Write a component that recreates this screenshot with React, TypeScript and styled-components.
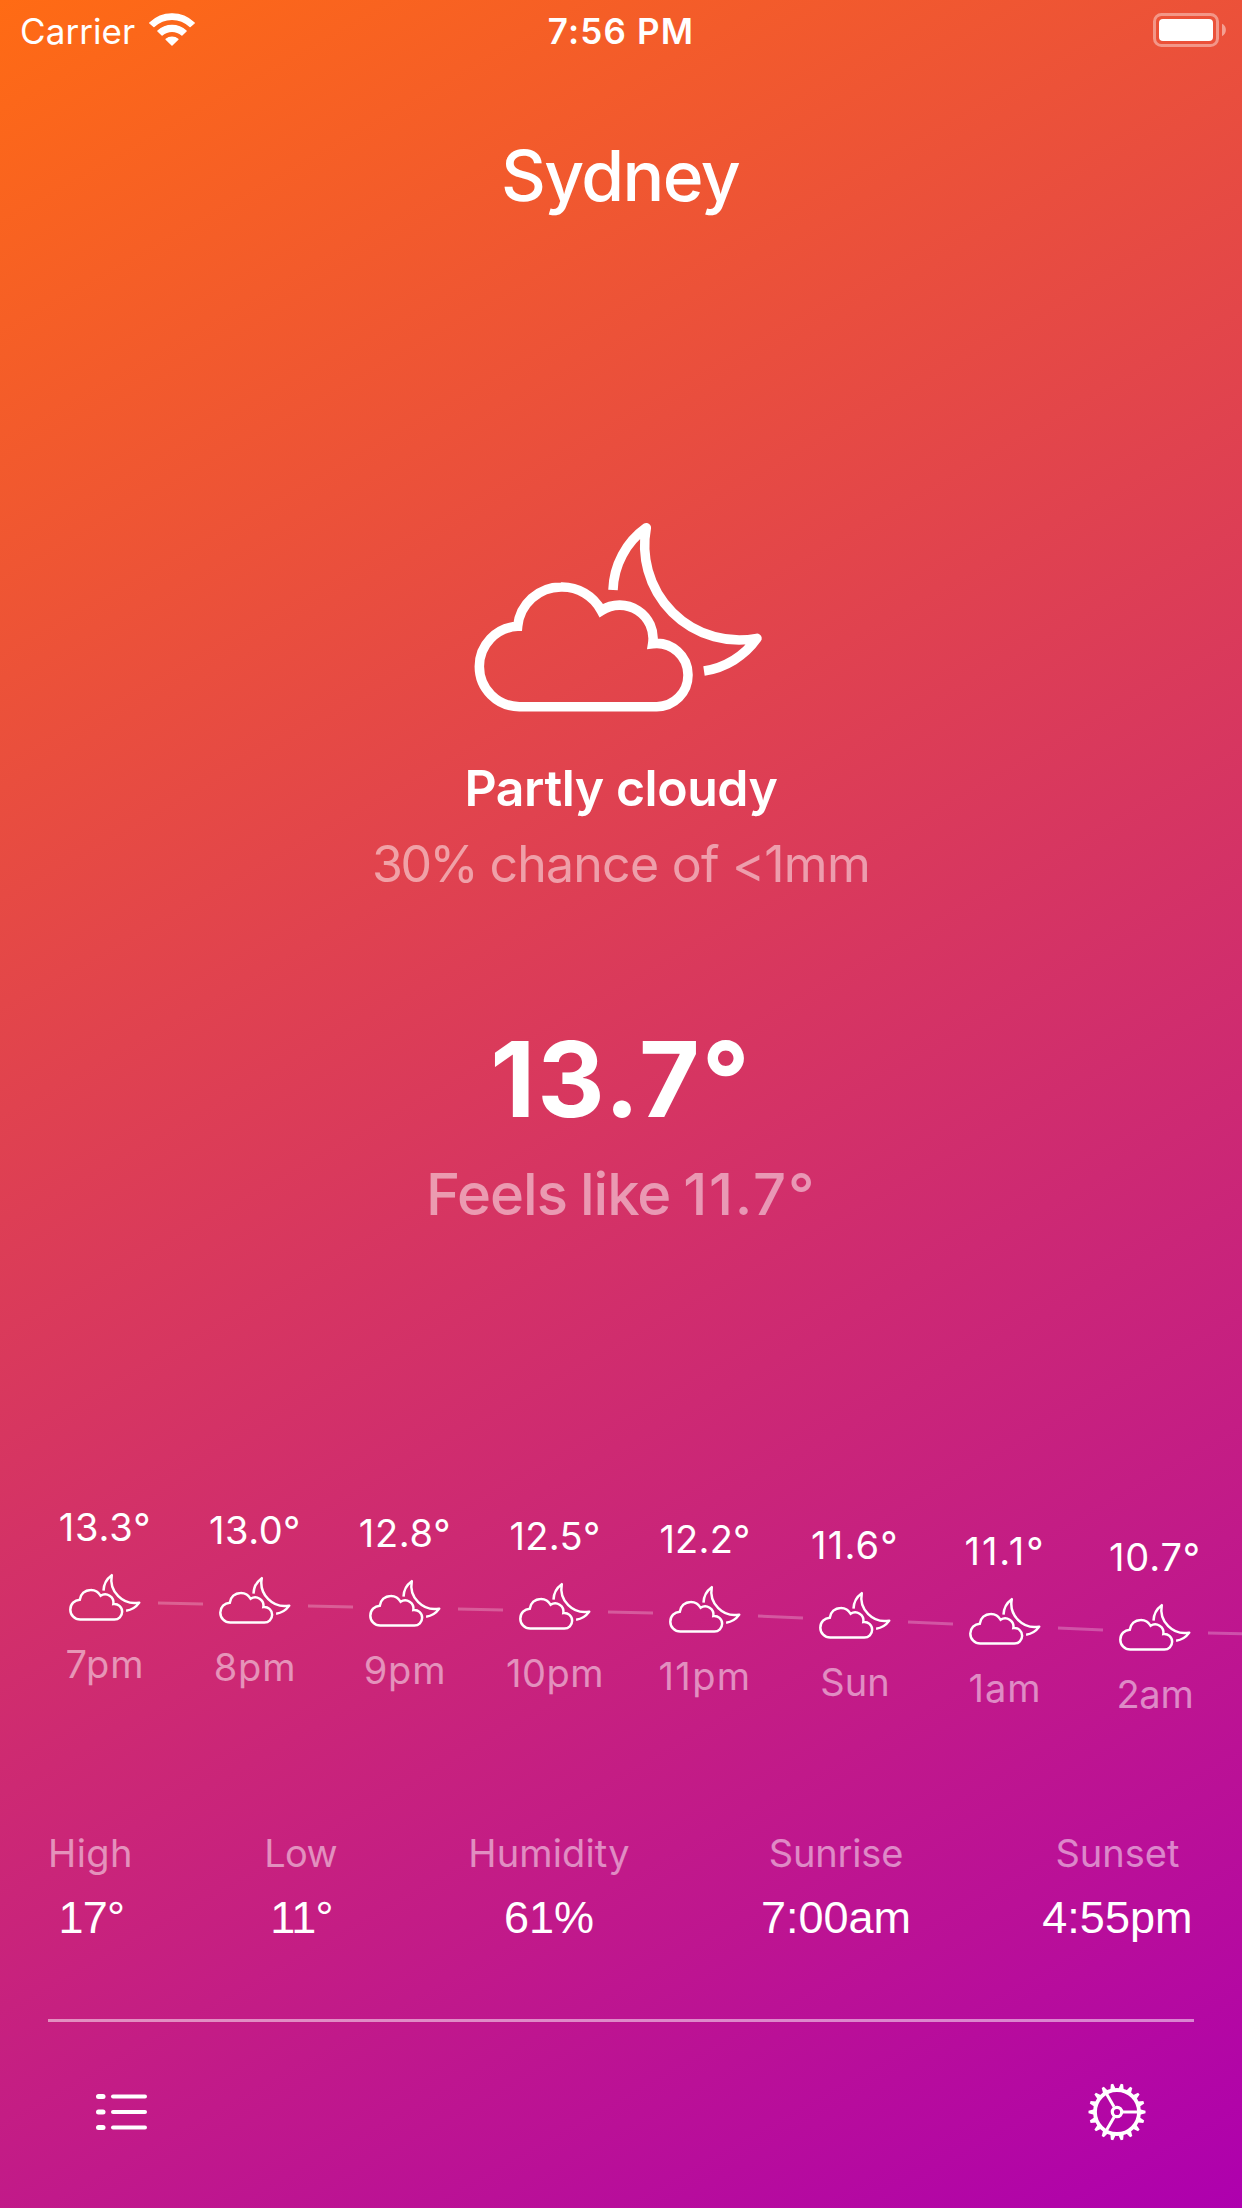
import React from "react";
import styled, { createGlobalStyle } from "styled-components";

const GlobalStyle = createGlobalStyle`
  html, body { margin: 0; padding: 0; }
  body { background: #c5178a; }
`;

const Screen = styled.main`
  display: flex;
  flex-direction: column;
  width: 1242px;
  height: 2208px;
  overflow: hidden;
  color: #fff;
  font-family: Inter, "Liberation Sans", sans-serif;
  background: linear-gradient(150.64deg, #ff6b14 0%, #ae00ae 100%);
  white-space: nowrap;
`;

const StatusBar = styled.header`
  display: grid;
  grid-template-columns: 1fr auto 1fr;
  align-items: center;
  height: 62px;
  padding: 0 16px 0 20px;
  font-size: 35px;
  line-height: 62px;
  svg {
    display: block;
    margin-bottom: 2px;
    overflow: visible;
  }
`;

const Carrier = styled.div`
  display: flex;
  align-items: center;
  gap: 14px;
  letter-spacing: 0.08px;
`;

const Clock = styled.div`
  font-weight: 600;
  letter-spacing: 1.15px;
  padding-right: 4px;
`;

const BatterySlot = styled.div`
  display: flex;
  justify-content: flex-end;
`;

const City = styled.h1`
  margin: 72px 0 0;
  padding-right: 2px;
  font-size: 69.5px;
  font-weight: 500;
  line-height: 84px;
  letter-spacing: -1.6px;
  text-align: center;
`;

const Conditions = styled.section`
  display: flex;
  flex-direction: column;
  align-items: center;
  margin-top: 305px;
  svg {
    display: block;
    overflow: visible;
  }
`;

const Summary = styled.p`
  margin: 47px 0 0;
  font-size: 50px;
  font-weight: 600;
  line-height: 60px;
  letter-spacing: -0.45px;
`;

const Rain = styled.p`
  margin: 16px 0 0;
  font-size: 50px;
  line-height: 60px;
  letter-spacing: -0.75px;
  color: rgba(255, 255, 255, 0.5);
`;

const Temperature = styled.p`
  margin: 125px 0 0;
  font-size: 104.5px;
  font-weight: 700;
  line-height: 120px;
  letter-spacing: 2.07px;
`;

const FeelsLike = styled.p`
  margin: 20px 0 0;
  font-size: 58px;
  font-weight: 500;
  line-height: 70px;
  letter-spacing: -1px;
  word-spacing: -1.5px;
  color: rgba(255, 255, 255, 0.5);
`;

const Figure = styled.span<{ $tracking: number }>`
  letter-spacing: ${(p) => p.$tracking}px;
`;

const Hourly = styled.section`
  display: flex;
  align-items: flex-start;
  height: 240px;
  margin-top: 275px;
  padding-left: 52.5px;
  overflow: hidden;
`;

const Hour = styled.div<{ $drop: number }>`
  display: flex;
  flex: none;
  flex-direction: column;
  align-items: center;
  width: 105px;
  padding-top: ${(p) => p.$drop}px;
  font-size: 38px;
  line-height: 46px;
  svg {
    display: block;
    margin: 24px 0 20px;
    overflow: visible;
  }
`;

const HourTemp = styled.div<{ $tracking: number }>`
  letter-spacing: ${(p) => p.$tracking}px;
`;

const HourLabel = styled.div<{ $tracking: number }>`
  letter-spacing: ${(p) => p.$tracking}px;
  color: rgba(255, 255, 255, 0.5);
`;

const Link = styled.svg`
  flex: none;
  display: block;
  margin-top: 98px;
  overflow: visible;
`;

const Details = styled.section`
  display: flex;
  justify-content: space-between;
  margin: 86px 49.5px 0 48px;
`;

const Detail = styled.div`
  display: flex;
  flex-direction: column;
  align-items: center;
`;

const DetailLabel = styled.div<{ $tracking: number }>`
  font-size: 38px;
  line-height: 46px;
  letter-spacing: ${(p) => p.$tracking}px;
  color: rgba(255, 255, 255, 0.5);
`;

const DetailValue = styled.div<{ $tracking: number; $indent: number }>`
  margin-top: 15px;
  padding-left: ${(p) => p.$indent}px;
  font-family: "Liberation Sans", Arial, sans-serif;
  font-size: 45px;
  line-height: 54px;
  letter-spacing: ${(p) => p.$tracking}px;
`;

const Divider = styled.hr`
  width: 1146px;
  height: 3px;
  margin: 74px auto 0;
  border: 0;
  background: rgba(255, 255, 255, 0.5);
`;

const Toolbar = styled.nav`
  display: flex;
  align-items: center;
  justify-content: space-between;
  height: 58px;
  padding: 61px 96px 0;
`;

const ToolButton = styled.button`
  display: block;
  padding: 0;
  border: 0;
  background: none;
  color: inherit;
  svg {
    display: block;
  }
`;

const WifiIcon = () => (
  <svg width="46" height="33.5" viewBox="149 13 46 33.5" fill="#fff" stroke="#fff" strokeWidth="1.4" strokeLinejoin="round">
    <path d="M149.8 22.9A31.7 31.7 0 0 1 194.2 22.9L190.1 26.6A25.9 25.9 0 0 0 153.9 26.6Z" />
    <path d="M157.9 31A20.9 20.9 0 0 1 186.1 31L181.9 35A15.1 15.1 0 0 0 162.1 35Z" />
    <path d="M166.1 39.2A9.4 9.4 0 0 1 177.9 39.2L172 45Z" />
  </svg>
);

const BatteryIcon = () => (
  <svg width="73" height="34" viewBox="0 0 73 34">
    <rect x="1.5" y="1.5" width="63" height="31" rx="7" fill="none" stroke="#fff" strokeOpacity=".4" strokeWidth="3" />
    <rect x="6" y="6" width="54" height="22" rx="4" fill="#fff" />
    <path d="M69 10.8C74.2 13 74.2 21 69 23.2Z" fill="#fff" fillOpacity=".45" />
  </svg>
);

const CloudMoon = ({ width, height, stroke }: { width: number; height: number; stroke: number }) => (
  <svg width={width} height={height} viewBox="42 39 864 565" preserveAspectRatio="xMinYMin meet" fill="none" stroke="#fff" strokeWidth={stroke}>
    <path
      d="M178 590A120.5 120.5 0 0 1 58 469.5A120.5 120.5 0 0 1 173 349A131 131 0 0 1 303 231A133 133 0 0 1 424 302A100 100 0 0 1 578 401A94.5 94.5 0 0 1 684 495.5A94.5 94.5 0 0 1 590 590Z"
      strokeMiterlimit="8"
    />
    <path d="M459 240A238 238 0 0 1 559 53A284 284 0 0 0 891 385A238 238 0 0 1 732 483" strokeLinejoin="round" />
  </svg>
);

const ListIcon = () => (
  <svg width="51" height="36" viewBox="0 0 51 36" stroke="#fff" strokeLinecap="round">
    {[2.6, 18, 33.4].map((y) => (
      <g key={y}>
        <path d={`M2.5 ${y}H7`} strokeWidth="5" />
        <path d={`M17 ${y}H49`} strokeWidth="4" />
      </g>
    ))}
  </svg>
);

const GearIcon = () => (
  <svg width="58" height="58" viewBox="-29 -29 58 58" fill="none" stroke="#fff">
    <circle r="22" strokeWidth="3.8" />
    <circle r="4.7" strokeWidth="3.2" />
    {[0, 120, 240].map((a) => (
      <path key={a} d="M6 0H21" strokeWidth="3" transform={`rotate(${a})`} />
    ))}
    {Array.from({ length: 18 }, (_, i) => (
      <path key={i} d="M23 -2.7L28.5 -1.2V1.2L23 2.7Z" fill="#fff" stroke="none" transform={`rotate(${i * 20})`} />
    ))}
  </svg>
);

type HourData = { temp: string; label: string; drop: number; tt: number; lt: number };

const hours: HourData[] = [
  { temp: "13.3°", label: "7pm", drop: 0, tt: 0.9, lt: 0.9 },
  { temp: "13.0°", label: "8pm", drop: 3, tt: 0.5, lt: 0.85 },
  { temp: "12.8°", label: "9pm", drop: 6, tt: 0.7, lt: 0.85 },
  { temp: "12.5°", label: "10pm", drop: 9, tt: 0.35, lt: 0.5 },
  { temp: "12.2°", label: "11pm", drop: 12, tt: 0.2, lt: 1.35 },
  { temp: "11.6°", label: "Sun", drop: 18, tt: 1.2, lt: 0 },
  { temp: "11.1°", label: "1am", drop: 24, tt: 1.9, lt: 1 },
  { temp: "10.7°", label: "2am", drop: 30, tt: 0.85, lt: -0.2 },
];

const details = [
  { label: "High", value: "17°", lt: 0.4, vt: -0.7, indent: 2 },
  { label: "Low", value: "11°", lt: -0.6, vt: -0.7, indent: 2 },
  { label: "Humidity", value: "61%", lt: 0.14, vt: 0, indent: 0 },
  { label: "Sunrise", value: "7:00am", lt: -0.15, vt: 0, indent: 0 },
  { label: "Sunset", value: "4:55pm", lt: 0, vt: 0, indent: 0 },
];

const NEXT_DROP = 33;

export default function App() {
  return (
    <>
      <GlobalStyle />
      <Screen>
        <StatusBar>
          <Carrier>
            <span>Carrier</span>
            <WifiIcon />
          </Carrier>
          <Clock>7:56 PM</Clock>
          <BatterySlot>
            <BatteryIcon />
          </BatterySlot>
        </StatusBar>

        <City>Sydney</City>

        <Conditions>
          <CloudMoon width={294} height={188.33} stroke={28.6} />
          <Summary>Partly cloudy</Summary>
          <Rain>
            <Figure $tracking={-2.5}>30%</Figure> chance of &lt;1mm
          </Rain>
          <Temperature>13.7°</Temperature>
          <FeelsLike>
            Feels like <Figure $tracking={1.7}>11.7°</Figure>
          </FeelsLike>
        </Conditions>

        <Hourly>
          {hours.map((h, i) => {
            const next = hours[i + 1]?.drop ?? NEXT_DROP;
            const mid = (h.drop + next) / 2;
            const rise = (next - h.drop) * 0.15;
            return (
              <React.Fragment key={h.label}>
                <Hour $drop={h.drop}>
                  <HourTemp $tracking={h.tt}>{h.temp}</HourTemp>
                  <CloudMoon width={71.5} height={46.8} stroke={30} />
                  <HourLabel $tracking={h.lt}>{h.label}</HourLabel>
                </Hour>
                <Link width="45" height="40" viewBox="0 0 45 40">
                  <path d={`M0 ${mid - rise}L45 ${mid + rise}`} stroke="#fff" strokeOpacity=".25" strokeWidth="3" />
                </Link>
              </React.Fragment>
            );
          })}
        </Hourly>

        <Details>
          {details.map((d) => (
            <Detail key={d.label}>
              <DetailLabel $tracking={d.lt}>{d.label}</DetailLabel>
              <DetailValue $tracking={d.vt} $indent={d.indent}>
                {d.value}
              </DetailValue>
            </Detail>
          ))}
        </Details>

        <Divider />

        <Toolbar>
          <ToolButton aria-label="Locations">
            <ListIcon />
          </ToolButton>
          <ToolButton aria-label="Settings">
            <GearIcon />
          </ToolButton>
        </Toolbar>
      </Screen>
    </>
  );
}
